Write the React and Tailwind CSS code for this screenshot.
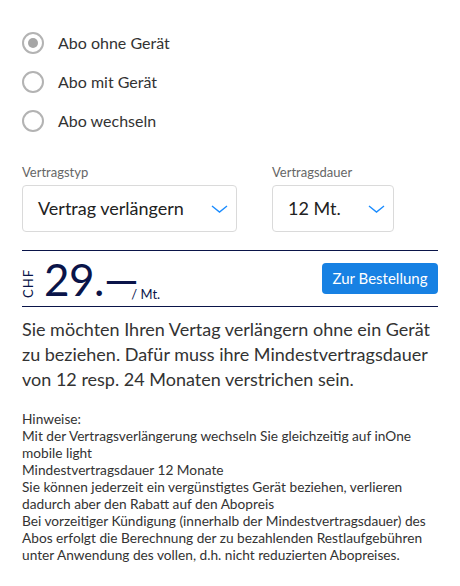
const font = { fontFamily: 'Lato, "Noto Sans", sans-serif' };

function Radio({ label, checked }) {
    return (
        <label className="flex items-center gap-[14px] h-[22px]">
            <span className="w-[22px] h-[22px] rounded-full border-2 border-[#b3b3b3] flex items-center justify-center flex-shrink-0">
                {checked && <span className="w-[10px] h-[10px] rounded-full bg-[#a6a6a6]" />}
            </span>
            <span className="text-[16px] text-[#333]">{label}</span>
        </label>
    );
}

function Chevron() {
    return (
        <svg width="17" height="8" viewBox="0 0 17 8" fill="none">
            <path d="M1 1l7.5 6L16 1" stroke="#1a8cff" strokeWidth="1.4" />
        </svg>
    );
}

function Select({ label, value, width }) {
    return (
        <div className="flex flex-col gap-[5px]">
            <span className="text-[13px] text-[#666] leading-[16px]">{label}</span>
            <div className={`${width} h-[47px] border border-[#dadada] rounded-[4px] flex items-center justify-between pl-[15px] pr-[8px]`}>
                <span className="text-[18px] text-[#222]">{value}</span>
                <Chevron />
            </div>
        </div>
    );
}

export default function App() {
    return (
        <div className="w-[460px] h-[586px] bg-white px-[22px] pt-[32px]" style={font}>
            <div className="flex flex-col gap-[17px]">
                <Radio label="Abo ohne Gerät" checked />
                <Radio label="Abo mit Gerät" />
                <Radio label="Abo wechseln" />
            </div>

            <div className="flex gap-[35px] mt-[32px]">
                <Select label="Vertragstyp" value="Vertrag verlängern" width="w-[215px]" />
                <Select label="Vertragsdauer" value="12 Mt." width="w-[122px]" />
            </div>

            <div className="mt-[18px] border-t border-b border-[#0a1449] h-[57px] flex items-center justify-between">
                <div className="flex items-end text-[#0a1449]">
                    <span className="[writing-mode:vertical-rl] rotate-180 text-[13px] leading-[12px] tracking-[1px] mb-[3px]">CHF</span>
                    <span className="text-[44px] leading-[44px] ml-[10px] tracking-[-0.5px]">29.—</span>
                    <span className="text-[13px] leading-[14px] ml-[-7px]">/ Mt.</span>
                </div>
                <button className="w-[116px] h-[31px] rounded-[4px] bg-[#1781e3] text-white text-[15px]">
                    Zur Bestellung
                </button>
            </div>

            <p className="mt-[10px] text-[18px] leading-[25px] text-[#333]">
                Sie möchten Ihren Vertag verlängern ohne ein Gerät zu beziehen. Dafür muss ihre Mindestvertragsdauer von 12 resp. 24 Monaten verstrichen sein.
            </p>

            <p className="mt-[18px] text-[13.7px] leading-[17px] text-[#333]">
                Hinweise:<br />
                Mit der Vertragsverlängerung wechseln Sie gleichzeitig auf inOne mobile light<br />
                Mindestvertragsdauer 12 Monate<br />
                Sie können jederzeit ein vergünstigtes Gerät beziehen, verlieren dadurch aber den Rabatt auf den Abopreis<br />
                Bei vorzeitiger Kündigung (innerhalb der Mindestvertragsdauer) des Abos erfolgt die Berechnung der zu bezahlenden Restlaufgebühren unter Anwendung des vollen, d.h. nicht reduzierten Abopreises.
            </p>
        </div>
    );
}
